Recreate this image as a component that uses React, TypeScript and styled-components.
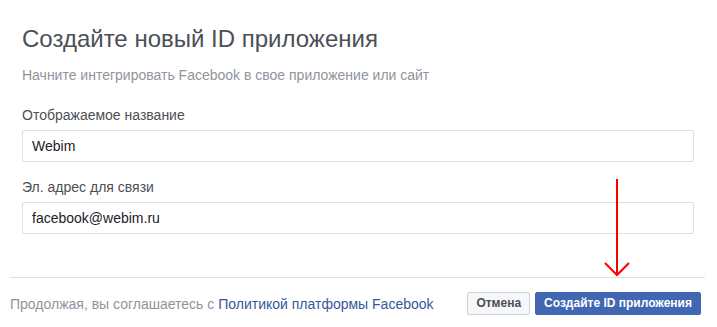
import styled, { createGlobalStyle } from "styled-components";

const GlobalStyle = createGlobalStyle`
  body {
    margin: 0;
    background: #ffffff;
    font-family: "Liberation Sans", Arial, Helvetica, sans-serif;
  }
`;

const Dialog = styled.div`
  position: relative;
  width: 717px;
  height: 327px;
  background: #ffffff;
  display: flex;
  flex-direction: column;
  overflow: hidden;
`;

const Body = styled.div`
  padding: 25px 23px 0 22px;
  display: flex;
  flex-direction: column;
`;

const Title = styled.h1`
  margin: 0;
  font-size: 24px;
  line-height: 28px;
  font-weight: normal;
  color: #4b4f56;
`;

const Subtitle = styled.div`
  margin-top: 13px;
  font-size: 14px;
  line-height: 18px;
  color: #90949c;
`;

const Field = styled.div<{ $first?: boolean }>`
  display: flex;
  flex-direction: column;
  margin-top: ${(p) => (p.$first ? "22px" : "16px")};
`;

const Label = styled.label`
  font-size: 14px;
  line-height: 18px;
  color: #4b4f56;
  margin-bottom: 6px;
`;

const Input = styled.input`
  box-sizing: border-box;
  height: 32px;
  width: 100%;
  border: 1px solid #dddfe2;
  border-radius: 2px;
  padding: 0 9px;
  font-family: inherit;
  font-size: 14px;
  color: #1d2129;
  background: #ffffff;
  outline: none;
`;

const Footer = styled.div`
  margin: 43px 12px 0 10px;
  border-top: 1px solid #dddfe2;
  padding: 14px 4px 13px 0;
  display: flex;
  align-items: center;
  justify-content: space-between;
`;

const Terms = styled.div`
  font-size: 14px;
  line-height: 18px;
  color: #90949c;
`;

const Link = styled.a`
  color: #365899;
  text-decoration: none;
`;

const Actions = styled.div`
  display: flex;
  gap: 5px;
`;

const Button = styled.button<{ $primary?: boolean }>`
  box-sizing: border-box;
  height: 23px;
  padding: 0 8px;
  border-radius: 2px;
  font-family: inherit;
  font-size: 12px;
  font-weight: bold;
  line-height: 21px;
  cursor: pointer;
  border: 1px solid ${(p) => (p.$primary ? "#4267b2" : "#ced0d4")};
  background: ${(p) => (p.$primary ? "#4267b2" : "#f6f7f9")};
  color: ${(p) => (p.$primary ? "#ffffff" : "#4b4f56")};
`;

const Arrow = styled.svg`
  position: absolute;
  left: 600px;
  top: 176px;
  pointer-events: none;
`;

export default function App() {
  return (
    <>
      <GlobalStyle />
      <Dialog>
        <Body>
          <Title>Создайте новый ID приложения</Title>
          <Subtitle>Начните интегрировать Facebook в свое приложение или сайт</Subtitle>
          <Field $first>
            <Label>Отображаемое название</Label>
            <Input defaultValue="Webim" />
          </Field>
          <Field>
            <Label>Эл. адрес для связи</Label>
            <Input defaultValue="facebook@webim.ru" />
          </Field>
        </Body>
        <Footer>
          <Terms>
            Продолжая, вы соглашаетесь с <Link href="#">Политикой платформы Facebook</Link>
          </Terms>
          <Actions>
            <Button>Отмена</Button>
            <Button $primary>Создайте ID приложения</Button>
          </Actions>
        </Footer>
        <Arrow width="34" height="104" viewBox="0 0 34 104">
          <line x1="17" y1="3" x2="17" y2="99" stroke="#ff0000" strokeWidth="2" />
          <polyline points="5,87 17,99 29,87" fill="none" stroke="#ff0000" strokeWidth="2" />
        </Arrow>
      </Dialog>
    </>
  );
}
